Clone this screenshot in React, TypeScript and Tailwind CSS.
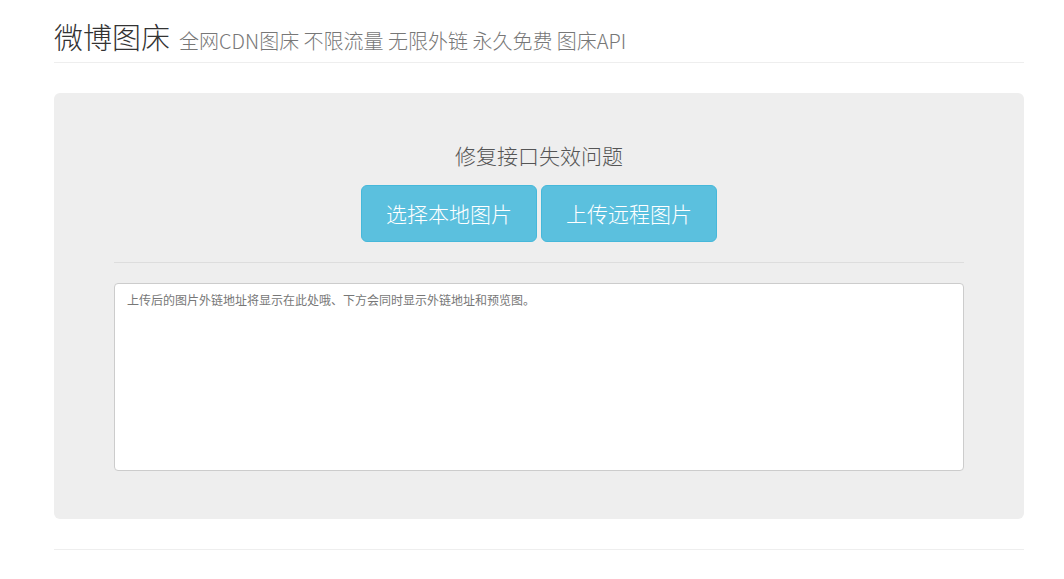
import React from "react";

const font = { fontFamily: '"Noto Sans CJK SC", "Noto Sans", sans-serif' };

const App = () => {
  return (
    <div className="min-h-screen bg-white text-[#333]" style={font}>
      <div className="w-[970px] ml-[54px]">
        {/* HEADER */}
        <div className="pt-[16px] pb-[6px] border-b border-[#eee] flex items-baseline gap-[9px]">
          <h1 className="text-[29px] leading-[40px] font-light text-[#333]">微博图床</h1>
          <small className="text-[20px] font-light text-[#777]">全网CDN图床 不限流量 无限外链 永久免费 图床API</small>
        </div>

        {/* JUMBOTRON */}
        <div className="mt-[30px] bg-[#eee] rounded-[6px] px-[60px] pt-[47px] pb-[48px]">
          <p className="text-center text-[21px] leading-[30px] font-light text-[#555]">修复接口失效问题</p>
          <div className="mt-[15px] flex justify-center gap-[4px]">
            <button className="w-[176px] h-[57px] rounded-[6px] bg-[#5bc0de] border border-[#46b8da] text-white text-[21px] font-light">
              选择本地图片
            </button>
            <button className="w-[176px] h-[57px] rounded-[6px] bg-[#5bc0de] border border-[#46b8da] text-white text-[21px] font-light">
              上传远程图片
            </button>
          </div>
          <hr className="mt-[20px] border-t border-[#ddd]" />
          <textarea
            className="mt-[20px] block w-full h-[188px] bg-white border border-[#ccc] rounded-[4px] px-[12px] py-[6px] text-[12px] leading-[20px] resize-none placeholder:text-[#777] outline-none"
            placeholder="上传后的图片外链地址将显示在此处哦、下方会同时显示外链地址和预览图。"
          />
        </div>

        <hr className="mt-[30px] border-t border-[#eee]" />
      </div>
    </div>
  );
};

export default App;
